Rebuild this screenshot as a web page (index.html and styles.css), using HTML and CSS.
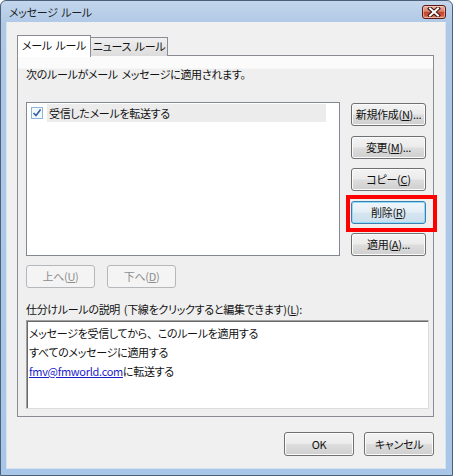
FILE: index.html
```html
<!DOCTYPE html>
<html lang="ja">
<head>
    <meta charset="UTF-8">
    <title>メッセージ ルール</title>
    <link rel="stylesheet" href="styles.css">
</head>
<body>

    <div class="window" role="dialog" aria-labelledby="dialogTitle">
        <header class="window__titlebar">
            <span class="window__title" id="dialogTitle">メッセージ ルール</span>
            <button class="window__close" aria-label="閉じる">
                <svg width="14" height="10" viewBox="0 0 14 10" aria-hidden="true">
                    <path d="M3 1.5 L11 8.5 M11 1.5 L3 8.5" stroke="#3a1410" stroke-width="4" stroke-linecap="square"/>
                    <path d="M3 1.5 L11 8.5 M11 1.5 L3 8.5" stroke="#ffffff" stroke-width="2" stroke-linecap="square"/>
                </svg>
            </button>
        </header>

        <div class="window__client">
            <div class="tabs" role="tablist">
                <span class="tabs__tab tabs__tab--active" role="tab" aria-selected="true">メール ルール</span>
                <span class="tabs__tab" role="tab" aria-selected="false">ニュース ルール</span>
            </div>

            <section class="panel" role="tabpanel">
                <p class="panel__label">次のルールがメール メッセージに適用されます。</p>

                <div class="rules">
                    <ul class="rules__list">
                        <li class="rules__item">
                            <svg class="rules__check" width="12" height="12" viewBox="0 0 12 12" aria-hidden="true">
                                <rect x="0.5" y="0.5" width="11" height="11" fill="#f4f9fe" stroke="#8fb4dc"/>
                                <path d="M2.5 6 L5 8.6 L9.6 2.6" fill="none" stroke="#2f62a8" stroke-width="1.6"/>
                            </svg>
                            <span class="rules__name">受信したメールを転送する</span>
                        </li>
                    </ul>

                    <div class="rules__actions">
                        <button class="btn">新規作成(<u>N</u>)...</button>
                        <button class="btn">変更(<u>M</u>)...</button>
                        <button class="btn">コピー(<u>C</u>)</button>
                        <button class="btn btn--focus">削除(<u>R</u>)<span class="highlight" aria-hidden="true"></span></button>
                        <button class="btn">適用(<u>A</u>)...</button>
                    </div>
                </div>

                <div class="order">
                    <button class="btn btn--small" disabled>上へ(<u>U</u>)</button>
                    <button class="btn btn--small" disabled>下へ(<u>D</u>)</button>
                </div>

                <p class="panel__label panel__label--desc">仕分けルールの説明 (下線をクリックすると編集できます)(<u>L</u>):</p>

                <div class="desc">
                    <p class="desc__line">メッセージを受信してから<span class="full">、</span>このルールを適用する</p>
                    <p class="desc__line">すべてのメッセージに適用する</p>
                    <p class="desc__line"><a href="#" class="desc__link">fmv@fmworld.com</a>に転送する</p>
                </div>
            </section>

            <footer class="window__footer">
                <button class="btn btn--footer">OK</button>
                <button class="btn btn--footer">キャンセル</button>
            </footer>
        </div>
    </div>

</body>
</html>
```

FILE: styles.css
```css
/*
========================================
Theme
========================================
*/
:root {
    --color-frame-top: #c3d6ec;
    --color-frame: #aec8e6;
    --color-frame-edge: #4d6079;
    --color-face: #f0f0f0;
    --color-tab-border: #898c95;
    --color-text: #111111;
    --color-disabled: #8d8d8d;
    --color-link: #1a1acc;

    --font-ui: "Noto Sans CJK JP", "Noto Sans", sans-serif;
}

*,
*::before,
*::after {
    box-sizing: border-box;
}

body {
    margin: 0;
    font-family: var(--font-ui);
    font-size: 11px;
    letter-spacing: -0.3px;
    word-spacing: 1.5px;
    line-height: 15px;
    color: var(--color-text);
    font-feature-settings: "palt";
}

p { margin: 0; }
ul { list-style: none; margin: 0; padding: 0; }
u { text-decoration: underline; text-underline-offset: 1px; }

/* keep the full-width comma in the description */
.full { font-feature-settings: normal; }

/*
========================================
Window frame
========================================
*/
.window {
    width: 453px;
    height: 476px;
    display: flex;
    flex-direction: column;
    border: 1px solid var(--color-frame-edge);
    border-radius: 6px 6px 0 0;
    background: linear-gradient(to bottom, var(--color-frame-top) 0, var(--color-frame) 24px, #a9c6e8 100%);
    overflow: hidden;
}

.window__titlebar {
    height: 22px;
    display: flex;
    align-items: center;
    justify-content: space-between;
    padding: 0 6px 0 8px;
}

.window__title {
    color: #1e1e1e;
    padding-top: 1px;
}

.window__close {
    width: 24px;
    height: 14px;
    margin-top: 1px;
    padding: 0;
    display: flex;
    align-items: center;
    justify-content: center;
    border: 1px solid #5a1c14;
    border-radius: 3px;
    background: linear-gradient(to bottom, #eab2a4 0%, #d8806f 45%, #c5412c 50%, #cf5a3e 80%, #e39a7a 100%);
    box-shadow: inset 0 0 0 1px rgba(255, 220, 210, 0.5);
}

.window__client {
    flex: 1;
    display: flex;
    flex-direction: column;
    margin: 0 6px 6px 5px;
    padding: 13px 11px 12px 10px;
    background: var(--color-face);
    border: 1px solid #d6e3f1;
    border-top: none;
}

/*
========================================
Tabs
========================================
*/
.tabs {
    height: 21px;
    display: flex;
    align-items: flex-end;
    position: relative;
    z-index: 1;
}

.tabs__tab {
    flex: none;
    height: 19px;
    width: 78px;
    margin-left: -1px;
    padding: 0 0 1px;
    display: flex;
    align-items: center;
    justify-content: center;
    white-space: nowrap;
    border: 1px solid var(--color-tab-border);
    border-bottom: none;
    background: linear-gradient(to bottom, #f0f0f0, #dcdcdc);
}

.tabs__tab--active {
    height: 22px;
    width: 74px;
    margin-left: 0;
    margin-bottom: -1px;
    background: #ffffff;
    padding-bottom: 3px;
}

.panel {
    height: 362px;
    margin-top: -1px;
    padding: 11px 7px 7px 8px;
    border: 1px solid var(--color-tab-border);
    background: linear-gradient(to bottom, #fbfbfb 0, #fbfbfb 12px, #efefef 13px, #efefef 100%);
}

.panel__label {
    height: 15px;
    white-space: nowrap;
}

.panel__label--desc {
    margin-top: 14px;
}

/*
========================================
Rule list and actions
========================================
*/
.rules {
    display: flex;
    margin-top: 20px;
}

.rules__list {
    width: 316px;
    height: 154px;
    padding: 1px 13px 0 4px;
    border: 1px solid #828790;
    background: #ffffff;
}

.rules__item {
    height: 18px;
    display: flex;
    align-items: center;
    gap: 4px;
}

.rules__check {
    flex: none;
}

.rules__name {
    flex: 1;
    height: 18px;
    padding-left: 2px;
    display: flex;
    align-items: center;
    background: #ececec;
}

.rules__actions {
    display: flex;
    flex-direction: column;
    gap: 9.5px;
    margin-left: 11px;
    padding-top: 1px;
}

/*
========================================
Buttons (Vista style)
========================================
*/
.btn {
    position: relative;
    width: 75px;
    height: 23px;
    padding: 0;
    font: inherit;
    letter-spacing: inherit;
    color: var(--color-text);
    white-space: nowrap;
    border: 1px solid #707070;
    border-radius: 3px;
    background: linear-gradient(to bottom, #f3f3f3 0%, #ebebeb 48%, #dddddd 52%, #cfcfcf 100%);
    box-shadow: inset 0 0 0 1px #fbfbfb;
}

.btn--focus {
    border-color: #3c7fb1;
    background: linear-gradient(to bottom, #f1f7fb 0%, #e3eef6 48%, #d6e6f1 52%, #cbdfec 100%);
    box-shadow: inset 0 0 0 1px #8fdcf6;
}

.btn:disabled {
    color: var(--color-disabled);
    border-color: #b4b8bb;
    background: #f4f4f4;
    box-shadow: none;
}

.btn--small {
    width: 69px;
}

.btn--footer {
    width: 70px;
    height: 24px;
}

/* Red callout drawn over the 削除 button */
.highlight {
    position: absolute;
    left: -6px;
    top: -7px;
    width: 91px;
    height: 37px;
    border: 4px solid #ff0000;
    pointer-events: none;
}

.order {
    display: flex;
    gap: 12px;
    margin-top: 9px;
}

/*
========================================
Description box
========================================
*/
.desc {
    width: 403px;
    height: 89px;
    margin-top: 3px;
    padding: 3px 2px;
    background: #ffffff;
    border: 1px solid #a0a0a0;
    border-right-color: #dcdcdc;
    border-bottom-color: #dcdcdc;
    box-shadow: inset 1px 1px 0 #6a6a6a;
}

.desc__line {
    line-height: 19px;
    white-space: nowrap;
}

.desc__link {
    color: var(--color-link);
    text-decoration: underline;
}

.window__footer {
    display: flex;
    justify-content: flex-end;
    gap: 10px;
    margin-top: 15px;
}
```
